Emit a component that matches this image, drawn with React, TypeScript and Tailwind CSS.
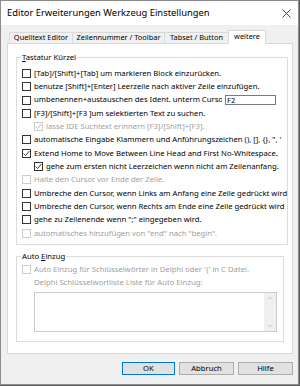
import React from 'react';

type Row = {
  text: string;
  checked?: boolean;
  disabled?: boolean;
  indent?: boolean;
  edit?: string;
};

const rows: Row[] = [
  { text: '[Tab]/[Shift]+[Tab] um markieren Block einzurücken.' },
  { text: 'benutze [Shift]+[Enter] Leerzeile nach aktiver Zeile einzufügen.' },
  { text: 'umbenennen+austauschen des Ident. unterm Cursor', edit: 'F2' },
  { text: '[F3]/[Shift]+[F3 ]um selektierten Text zu suchen.' },
  { text: 'lasse IDE Suchtext erinnern [F3]/[Shift]+[F3].', indent: true, checked: true, disabled: true },
  { text: 'automatische Eingabe Klammern und Anführungszeichen (), [], {}, ", \'' },
  { text: 'Extend Home to Move Between Line Head and First No-Whitespace.', checked: true },
  { text: 'gehe zum ersten nicht Leerzeichen wenn nicht am Zeilenanfang.', indent: true, checked: true },
  { text: 'Halte den Cursor vor Ende der Zeile.', disabled: true },
  { text: 'Umbreche den Cursor, wenn Links am Anfang eine Zeile gedrückt wird' },
  { text: 'Umbreche den Cursor, wenn Rechts am Ende eine Zeile gedrückt wird' },
  { text: 'gehe zu Zeilenende wenn ";" eingegeben wird.' },
  { text: 'automatisches hinzufügen von "end" nach "begin".', disabled: true },
];

function Box({ checked, disabled }: { checked?: boolean; disabled?: boolean }) {
  return (
    <span
      className={`w-[9px] h-[9px] shrink-0 border bg-white flex items-center justify-center ${
        disabled ? 'border-[#cccccc]' : 'border-[#333333]'
      }`}
    >
      {checked && (
        <svg width="7" height="7" viewBox="0 0 7 7">
          <path
            d="M0.6 3.6 L2.6 5.6 L6.4 1"
            fill="none"
            stroke={disabled ? '#b5b5b5' : '#222222'}
            strokeWidth="0.9"
          />
        </svg>
      )}
    </span>
  );
}

function CheckRow({ row }: { row: Row }) {
  return (
    <div className={`h-[13.33px] flex items-center gap-[3px] ${row.indent ? 'pl-[17px]' : 'pl-[5px]'}`}>
      <Box checked={row.checked} disabled={row.disabled} />
      {row.edit ? (
        <>
          <span className="w-[188px] shrink-0 overflow-hidden whitespace-nowrap">{row.text}</span>
          <span className="w-[51px] h-[10px] shrink-0 border border-[#7a7a7a] bg-white leading-[8px] pl-[1px]">
            {row.edit}
          </span>
        </>
      ) : (
        <span className={`whitespace-nowrap ${row.disabled ? 'text-[#a0a0a0]' : 'text-black'}`}>{row.text}</span>
      )}
    </div>
  );
}

function Tab({ label, active, w }: { label: string; active?: boolean; w: string }) {
  return (
    <div
      className={`${w} border border-[#d9d9d9] flex items-center justify-center whitespace-nowrap text-[7.4px] ${
        active ? 'h-[14px] bg-white border-b-white relative z-10' : 'h-[12px] bg-[#f0f0f0]'
      }`}
    >
      {label}
    </div>
  );
}

export default function App() {
  return (
    <div className="w-[300px] h-[386px] bg-[#5c5c5c] font-['Noto_Sans',sans-serif] text-[7.7px] text-black">
      <div className="w-[299px] h-[385px] border border-[#8c8c8c] bg-[#f0f0f0] flex flex-col">
        <div className="h-[24px] bg-white flex items-center justify-between pl-[6px] pr-[7px]">
          <span className="text-[9.4px]">Editor Erweiterungen Werkzeug Einstellungen</span>
          <svg width="9" height="9" viewBox="0 0 9 9">
            <path d="M0.5 0.5 L8.5 8.5 M8.5 0.5 L0.5 8.5" stroke="#333" strokeWidth="0.9" />
          </svg>
        </div>

        <div className="flex items-end pl-[8px] mt-[5px] -mb-px">
          <Tab label="Quelltext Editor" w="w-[64px]" />
          <Tab label="Zeilennummer / Toolbar" w="w-[93px] -ml-px" />
          <Tab label="Tabset / Button" w="w-[65px] -ml-px" />
          <Tab label="weitere" w="w-[38px] -ml-px" active />
        </div>

        <div className="mx-[6px] w-[286px] h-[311px] border border-[#d9d9d9] bg-white flex flex-col">
          <fieldset className="ml-[8px] mt-[8px] w-[268px] border border-[#dcdcdc] pt-[3.7px] pb-[4px] overflow-hidden">
            <legend className="ml-[4px] px-[1px] leading-[11px]">
              <span className="underline">T</span>astatur Kürzel
            </legend>
            {rows.map((r, i) => (
              <CheckRow key={i} row={r} />
            ))}
          </fieldset>

          <fieldset className="ml-[8px] mt-[6px] w-[268px] border border-[#dcdcdc] pt-[1px] pb-[9px]">
            <legend className="ml-[4px] px-[1px] leading-[11px]">
              Auto <span className="underline">E</span>inzug
            </legend>
            <CheckRow row={{ text: 'Auto Einzug für Schlüsselwörter in Delphi oder \'{\' in C Datei.', disabled: true }} />
            <div className="h-[13.33px] flex items-center pl-[17px] text-[#a0a0a0]">
              Delphi Schlüsselwortliste Liste für Auto Einzug:
            </div>
            <div className="ml-[17px] mt-[2px] w-[243px] h-[40px] border border-[#cccccc] flex justify-end">
              <div className="w-[12px] h-full bg-[#f0f0f0] flex flex-col justify-between items-center py-[3px]">
                <svg width="6" height="4" viewBox="0 0 6 4">
                  <path d="M0.5 3.5 L3 1 L5.5 3.5" fill="none" stroke="#bfbfbf" strokeWidth="0.9" />
                </svg>
                <svg width="6" height="4" viewBox="0 0 6 4">
                  <path d="M0.5 0.5 L3 3 L5.5 0.5" fill="none" stroke="#bfbfbf" strokeWidth="0.9" />
                </svg>
              </div>
            </div>
          </fieldset>
        </div>

        <div className="flex justify-end gap-[4px] pr-[5px] mt-[8px]">
          <button className="w-[53px] h-[13px] bg-[#e1e1e1] border border-[#0078d7] flex items-center justify-center">
            OK
          </button>
          <button className="w-[55px] h-[13px] bg-[#e1e1e1] border border-[#adadad] flex items-center justify-center">
            Abbruch
          </button>
          <button className="w-[55px] h-[13px] bg-[#e1e1e1] border border-[#adadad] flex items-center justify-center">
            Hilfe
          </button>
        </div>
      </div>
    </div>
  );
}
